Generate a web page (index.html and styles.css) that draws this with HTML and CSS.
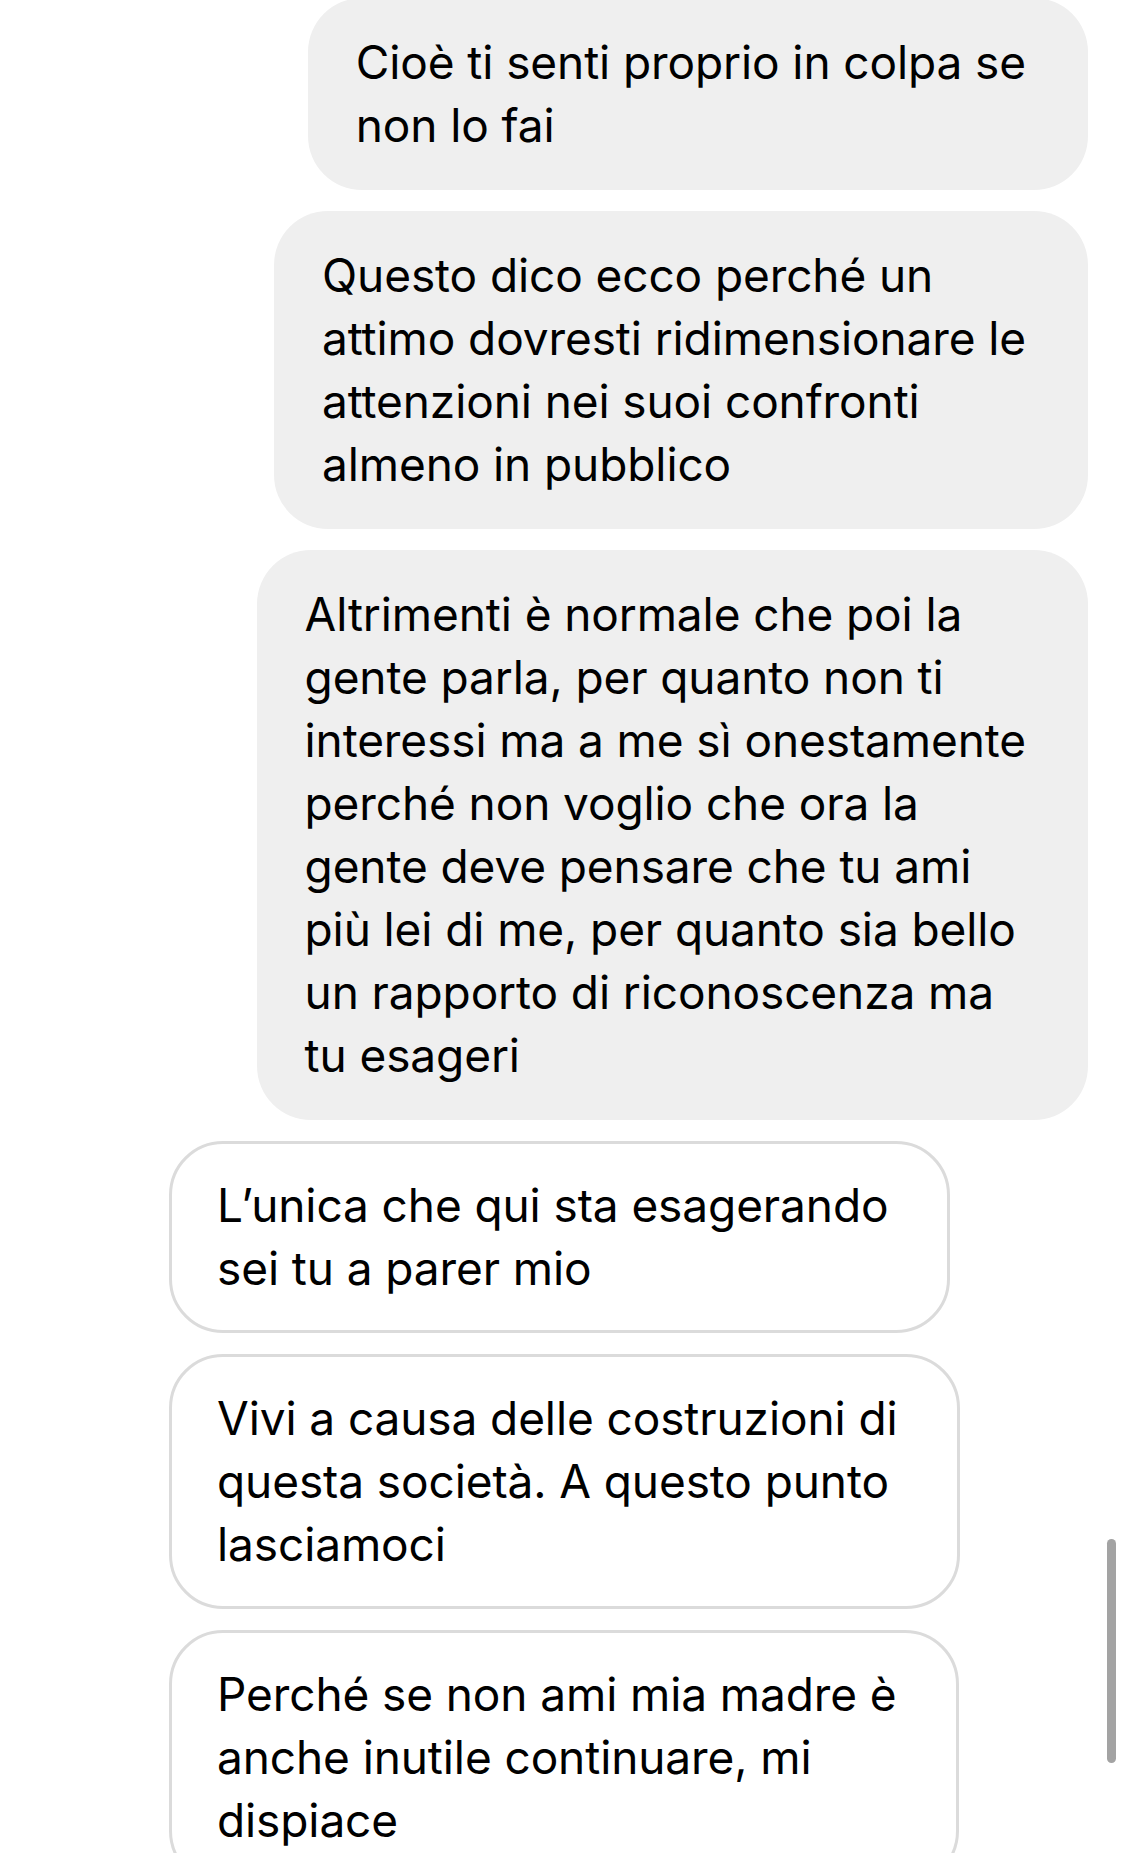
FILE: index.html
```
<!DOCTYPE html>
<html lang="it">
<head>
    <meta charset="UTF-8">
    <meta name="viewport" content="width=device-width, initial-scale=1.0">
    <title>Chat</title>
    <link rel="stylesheet" href="styles.css">
</head>
<body>

    <!-- Conversation thread -->
    <main class="thread">
        <div class="msg sent">Cioè ti senti proprio in colpa se<br>non lo fai</div>
        <div class="msg sent">Questo dico ecco perché un<br>attimo dovresti ridimensionare le<br>attenzioni nei suoi confronti<br>almeno in pubblico</div>
        <div class="msg sent">Altrimenti è normale che poi la<br>gente parla, per quanto non ti<br>interessi ma a me sì onestamente<br>perché non voglio che ora la<br>gente deve pensare che tu ami<br>più lei di me, per quanto sia bello<br>un rapporto di riconoscenza ma<br>tu esageri</div>
        <div class="msg received">L’unica che qui sta esagerando<br>sei tu a parer mio</div>
        <div class="msg received">Vivi a causa delle costruzioni di<br>questa società. A questo punto<br>lasciamoci</div>
        <div class="msg received">Perché se non ami mia madre è<br>anche inutile continuare, mi<br>dispiace</div>
    </main>

    <!-- Scroll indicator -->
    <div class="scroll-thumb"></div>

</body>
</html>
```

FILE: styles.css
```
/* Page */
html, body {
    margin: 0;
    padding: 0;
    background: #ffffff;
    color: #000000;
    font-family: "Inter", "Roboto", sans-serif;
    height: 100vh;
    overflow: hidden;
}

/* Message list */
.thread {
    display: flex;
    flex-direction: column;
    gap: 21px;
    padding: 0 37px 0 169px;
    margin-top: -2px;
}

/* Single bubble */
.msg {
    width: fit-content;
    box-sizing: border-box;
    padding: 33px 62px 33px 48px;
    border-radius: 54px;
    font-size: 46px;
    line-height: 63px;
    letter-spacing: -0.1px;
}

.sent {
    align-self: flex-end;
    background-color: #efefef;
}

.received {
    align-self: flex-start;
    background-color: #ffffff;
    border: 3px solid #dbdbdb;
    padding: 30px 59px 30px 45px;
}

/* Scrollbar thumb overlay */
.scroll-thumb {
    position: absolute;
    top: 1539px;
    left: 1107px;
    width: 9px;
    height: 224px;
    border-radius: 5px;
    background-color: #a3a3a3;
}
```
